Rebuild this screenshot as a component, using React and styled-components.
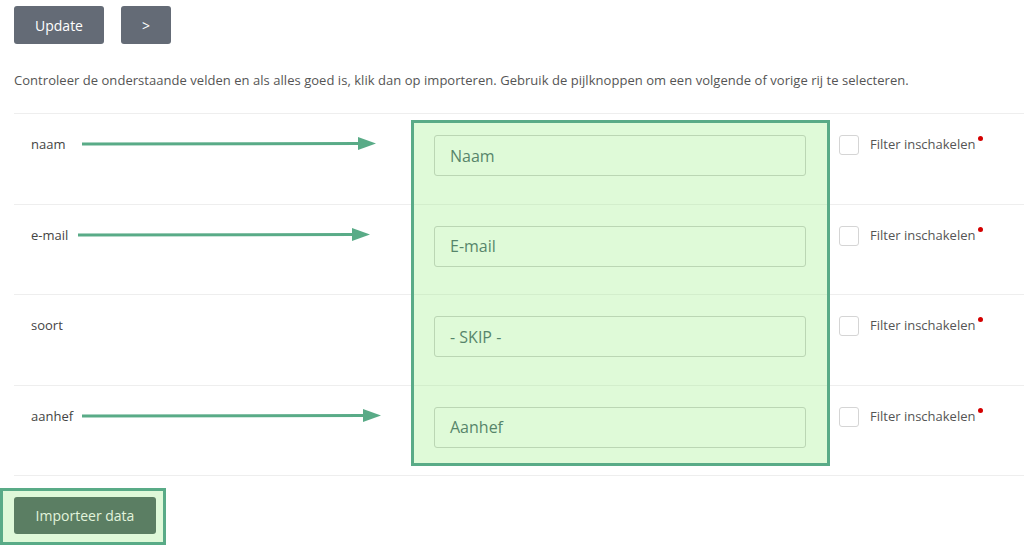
import React from "react";
import styled, { createGlobalStyle } from "styled-components";

const Global = createGlobalStyle`
  html, body { margin: 0; padding: 0; background: #fff; }
  body { font-family: "Open Sans", "Liberation Sans", sans-serif; color: #555; }
  * { box-sizing: border-box; }
`;

const ACCENT = "#59ab87";
const TINT = "rgba(144, 238, 120, 0.29)";

const Page = styled.div`
  padding: 6px 0 0 14px;
`;

const Toolbar = styled.div`
  display: flex;
  gap: 17px;
`;

const GreyButton = styled.button`
  height: 38px;
  width: ${(p) => p.$w}px;
  border: none;
  border-radius: 3px;
  background: #646b76;
  color: #fff;
  font-family: inherit;
  font-size: 14px;
  padding: 0;
  cursor: pointer;
`;

const Intro = styled.p`
  margin: 26px 0 23px;
  font-size: 13px;
  line-height: 20px;
  letter-spacing: 0.04px;
  color: #555;
`;

const Table = styled.div`
  position: relative;
  border-bottom: 1px solid #eee;
`;

const Row = styled.div`
  position: relative;
  display: grid;
  grid-template-columns: 420px 372px 1fr;
  height: 90.5px;
  border-top: 1px solid #eee;
`;

const Label = styled.div`
  padding: 20px 0 0 17px;
  font-size: 13px;
  line-height: 20px;
  color: #444;
`;

const InputCell = styled.div`
  padding-top: 21px;
`;

const Field = styled.div`
  height: 41px;
  border: 1px solid #ccc;
  border-radius: 3px;
  background: #fff;
  padding-left: 15px;
  display: flex;
  align-items: center;
  font-size: 16px;
  color: #3f5a66;
`;

const FilterCell = styled.div`
  padding: 21px 0 0 33px;
  display: flex;
  align-items: flex-start;
  gap: 11px;
`;

const Check = styled.span`
  width: 20px;
  height: 20px;
  border: 1px solid #d5d5d5;
  border-radius: 3px;
  background: #fff;
  flex: none;
`;

const FilterLabel = styled.span`
  font-size: 13px;
  line-height: 18px;
  color: #555;
`;

const Required = styled.span`
  display: inline-block;
  width: 5px;
  height: 5px;
  border-radius: 50%;
  background: #d40000;
  margin-left: 3px;
  vertical-align: 8px;
`;

const ArrowWrap = styled.svg`
  position: absolute;
  top: 22px;
  overflow: visible;
`;

const Highlight = styled.div`
  position: absolute;
  left: 397px;
  top: 7px;
  width: 419px;
  height: 346px;
  border: 3px solid ${ACCENT};
  background: ${TINT};
  pointer-events: none;
`;

const ImportFrame = styled.div`
  display: inline-block;
  margin: 12px 0 0 -14px;
  padding: 6px 7px 8px 11px;
  border: 3px solid ${ACCENT};
  background: #dff9d9;
`;

const ImportButton = styled.button`
  display: block;
  width: 142px;
  height: 37px;
  border: none;
  border-radius: 3px;
  background: #5b7e63;
  color: #e2f4dc;
  font-family: inherit;
  font-size: 14px;
  padding: 0;
`;

function Arrow({ left, width }) {
  return (
    <ArrowWrap style={{ left, width }} width={width} height="16" viewBox={`0 0 ${width} 16`}>
      <line x1="0" y1="8" x2={width - 16} y2="7.5" stroke={ACCENT} strokeWidth="3" />
      <polygon points={`${width - 18},1 ${width},7.5 ${width - 18},14`} fill={ACCENT} />
    </ArrowWrap>
  );
}

const rows = [
  { label: "naam", value: "Naam", arrow: { left: 68, width: 294 } },
  { label: "e-mail", value: "E-mail", arrow: { left: 64, width: 292 } },
  { label: "soort", value: "- SKIP -" },
  { label: "aanhef", value: "Aanhef", arrow: { left: 68, width: 299 } },
];

export default function App() {
  return (
    <>
      <Global />
      <Page>
        <Toolbar>
          <GreyButton $w={90}>Update</GreyButton>
          <GreyButton $w={50}>&gt;</GreyButton>
        </Toolbar>
        <Intro>
          Controleer de onderstaande velden en als alles goed is, klik dan op importeren. Gebruik de
          pijlknoppen om een volgende of vorige rij te selecteren.
        </Intro>
        <Table>
          {rows.map((r) => (
            <Row key={r.label}>
              <Label>{r.label}</Label>
              <InputCell>
                <Field>{r.value}</Field>
              </InputCell>
              <FilterCell>
                <Check />
                <FilterLabel>
                  Filter inschakelen
                  <Required />
                </FilterLabel>
              </FilterCell>
              {r.arrow && <Arrow left={r.arrow.left} width={r.arrow.width} />}
            </Row>
          ))}
          <Highlight />
        </Table>
        <ImportFrame>
          <ImportButton>Importeer data</ImportButton>
        </ImportFrame>
      </Page>
    </>
  );
}
